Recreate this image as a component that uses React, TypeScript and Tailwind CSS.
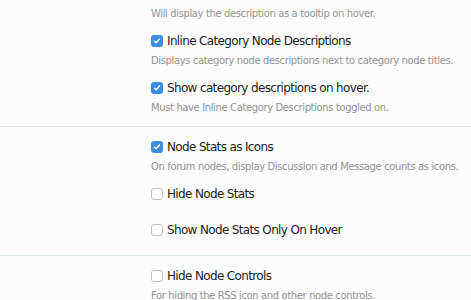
const FONT = "font-['DejaVu_Sans',sans-serif]";

function Check({ checked }: { checked?: boolean }) {
  if (checked) {
    return (
      <span className="flex h-[12px] w-[12px] items-center justify-center rounded-[3px] bg-[#3d8de0]">
        <svg width="8" height="8" viewBox="0 0 8 8" fill="none">
          <path d="M1.5 4.2 L3.2 5.8 L6.5 2" stroke="white" strokeWidth="1.3" strokeLinecap="round" strokeLinejoin="round" />
        </svg>
      </span>
    );
  }
  return <span className="h-[12px] w-[12px] rounded-[3px] border border-[#c2c2c2] bg-white" />;
}

function Desc({ children }: { children: string }) {
  return (
    <p className="h-[20px] whitespace-nowrap text-[10px] leading-[20px] tracking-[-0.38px] text-[#939393]">
      {children}
    </p>
  );
}

function Option({ label, checked, desc }: { label: string; checked?: boolean; desc?: string }) {
  return (
    <div>
      <label className="flex h-[20px] items-center gap-[4px] whitespace-nowrap text-[12px] tracking-[-0.65px] text-[#1c1c1c]">
        <Check checked={checked} />
        <span>{label}</span>
      </label>
      {desc && <Desc>{desc}</Desc>}
    </div>
  );
}

export default function App() {
  return (
    <div className={`h-[300px] w-[471px] overflow-hidden bg-[#fcfcfd] ${FONT}`}>
      <div className="border-b border-[#dde9ef] pb-[8px] pl-[151px] pt-[4px]">
        <Desc>Will display the description as a tooltip on hover.</Desc>
        <div className="mt-[7px] flex flex-col gap-[7px]">
          <Option
            checked
            label="Inline Category Node Descriptions"
            desc="Displays category node descriptions next to category node titles."
          />
          <Option
            checked
            label="Show category descriptions on hover."
            desc="Must have Inline Category Descriptions toggled on."
          />
        </div>
      </div>
      <div className="border-b border-[#dde9ef] pb-[15px] pl-[151px] pt-[10px]">
        <Option
          checked
          label="Node Stats as Icons"
          desc="On forum nodes, display Discussion and Message counts as icons."
        />
        <div className="mt-[7px]">
          <Option label="Hide Node Stats" />
        </div>
        <div className="mt-[16px]">
          <Option label="Show Node Stats Only On Hover" />
        </div>
      </div>
      <div className="pl-[151px] pt-[10px]">
        <Option label="Hide Node Controls" desc="For hiding the RSS icon and other node controls." />
      </div>
    </div>
  );
}
